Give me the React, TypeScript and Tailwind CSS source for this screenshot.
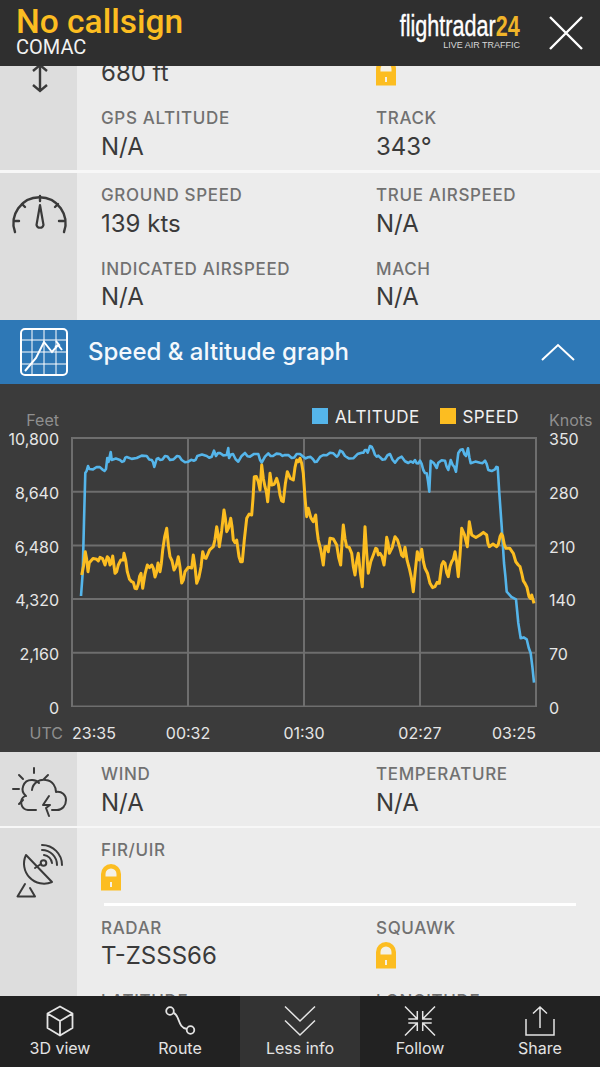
import React from "react";

const altitude: number[][] = [
  [81, 596], [82.7, 573], [85.3, 473], [88, 466], [89.3, 469], [96.7, 467], [103, 470], [106, 469], [107.3, 458], [108.5, 462],
  [110.7, 452], [111.7, 460], [120, 460], [124, 461], [126.7, 457], [136.7, 458], [146.7, 456], [151.7, 460], [154.3, 467], [156.7, 459],
  [160, 460], [165, 456], [170, 460], [177, 456], [181.7, 460], [188.3, 461.7], [194, 460.7], [197.3, 456], [206.7, 456], [211.7, 456.7],
  [214, 450.7], [216, 456], [220, 453], [226.7, 455], [228.3, 448], [229, 458], [233, 454], [238.3, 461.7], [245, 453], [250, 456.7],
  [258.3, 454], [261.7, 462.7], [268.3, 453.3], [273, 456], [280, 454], [285, 455], [291.7, 458], [296.7, 454], [303.3, 456.7], [308, 457.3],
  [313, 459.3], [316.7, 461.7], [323.3, 455], [330, 452.7], [336.7, 456.7], [340, 450.7], [345, 456], [353.3, 458.3], [361.7, 452.7], [365, 450],
  [367.7, 452.7], [370, 446], [373.3, 450], [376.7, 456.7], [380, 457.3], [385, 459.3], [390, 454], [395, 462.7], [401.7, 456.7], [408.3, 463],
  [413, 462.7], [415, 460], [416.7, 463.3], [420, 460.7], [423.3, 470], [426.7, 473.3], [429.3, 491.7], [430.7, 460.7], [436.7, 468], [438.3, 462.7],
  [445, 460.7], [448.3, 470], [450.7, 460], [452.7, 465], [456, 471.7], [458.3, 453], [462.7, 449.3], [466, 456], [468, 448.3], [470.7, 463.3],
  [480, 462.7], [485, 460.7], [488.3, 470], [495, 469.3], [497.7, 467.3], [499.3, 493], [501.7, 526.7], [504, 563], [506.7, 591.7], [516, 599.3],
  [518.3, 623], [520.7, 638.3], [526.7, 639.3], [530.7, 653.3], [534, 682.7],
];

const speed: number[][] = [
  [81.7, 575], [85.3, 551.7], [88, 571.7], [89.3, 562.7], [96.7, 559.3], [100, 557.3], [105, 565], [107.3, 556.7], [110, 565], [112.7, 556],
  [115, 573.3], [118.3, 565], [123.3, 560], [124, 553.3], [127.3, 571.7], [131.7, 581.7], [135, 588.3], [138.3, 584], [141, 573.3], [142.7, 588.3],
  [147.3, 565], [151.7, 565], [155, 577], [158, 563], [160, 571.7], [162.7, 550], [166.7, 528.3], [170, 556.7], [174, 570], [178.3, 556.7],
  [181.7, 583], [185, 571.7], [191.7, 568], [193.3, 555], [196.7, 583.3], [201, 567], [202.7, 551.7], [206, 558.3], [213.3, 546.7], [216.7, 526.7],
  [219.3, 546.7], [224, 510], [226.7, 531.7], [230.7, 518.3], [233.3, 540], [236.7, 540], [239, 556.7], [242.3, 561.7], [244.3, 540], [246.7, 518.3],
  [251.7, 515], [254.3, 476.7], [258.3, 481.7], [260, 490], [261.7, 465], [265, 486.7], [267.7, 501.7], [270, 473.3], [271.7, 485], [276.7, 478.3],
  [280, 495], [283.3, 501.7], [287.3, 471.7], [293.3, 480], [296.7, 460], [300, 458.3], [303.3, 473.3], [306.7, 516.7], [308.3, 508.3], [313.3, 521.7],
  [315.7, 515], [318.3, 540], [323.3, 565], [325, 546.7], [328.3, 551.7], [330, 538.3], [336.7, 545], [340.7, 565], [343.3, 525], [346.7, 546.7],
  [351.7, 553.3], [355, 575], [358.3, 553.3], [362.3, 586.7], [365, 526.7], [368.3, 573.3], [373.3, 555], [375.7, 548.3], [378.3, 555], [380, 553.3],
  [384, 565], [386.7, 537.3], [389.3, 553.3], [395, 536.7], [400, 548.3], [403.3, 556.7], [405, 547.3], [409.3, 568.3], [413.3, 591.7], [415, 573.3],
  [417.3, 551.7], [419.3, 560], [421.7, 549.3], [425, 568.3], [430, 583.3], [435, 586.7], [439.3, 583.3], [441.7, 565], [445, 563.3], [448.3, 576.7],
  [451.7, 561.7], [455, 551.7], [458.3, 576.7], [461.7, 528.3], [467.3, 546.7], [469.3, 521.7], [471.7, 535], [480, 535], [486.7, 535], [489.3, 546.7],
  [496.7, 546.7], [500, 536.7], [502.7, 536], [506, 548.3], [513.3, 553.3], [518.3, 565], [521.7, 573.3], [525, 583.3], [529, 596.7], [531.7, 595], [534, 603.3],
];

// small zig-zag between traced points so the line has the noisy look of the data
const toPoints = (pts: number[][], noise: number) => {
  const out: string[] = [];
  pts.forEach((p, i) => {
    const next = pts[i + 1];
    out.push(`${p[0]},${p[1]}`);
    if (next && next[0] - p[0] > 2.5) {
      const off = i % 2 === 0 ? noise : -noise;
      out.push(`${(p[0] + next[0]) / 2},${(p[1] + next[1]) / 2 + off}`);
    }
  });
  return out.join(" ");
};

const Lock = () => (
  <svg width="20" height="27" viewBox="0 0 20 27" className="block">
    <path d="M0 26.500V10a10 10 0 0 1 20 0v16.500z" fill="#fcbd21" />
    <path d="M4.500 12.500V10a5.500 5.500 0 0 1 11 0v2.500z" fill="#f4f1e6" />
    <rect x="9" y="18" width="2" height="5" fill="#f4f1e6" />
  </svg>
);

const Field = ({ label, value, lock }: { label: string; value?: string; lock?: boolean }) => (
  <div className="h-[73.5px] pt-3">
    <div className="h-5 text-[17px] leading-5 font-medium tracking-[0.65px] text-[#717171]">{label}</div>
    {lock ? (
      <div className="mt-1">
        <Lock />
      </div>
    ) : (
      <div className="mt-[2.5px] h-8 text-[24px] leading-8 text-[#3a3a3a]">{value}</div>
    )}
  </div>
);

const Section = ({ icon, children, className }: { icon: React.ReactNode; children: React.ReactNode; className?: string }) => (
  <section className={`flex ${className ?? ""}`}>
    <div className="w-[77px] shrink-0 bg-[#dddddd]">{icon}</div>
    <div className="flex-1 bg-[#ececec] pl-6">{children}</div>
  </section>
);

const Grid = ({ children }: { children: React.ReactNode }) => (
  <div className="grid grid-cols-[275px_1fr]">{children}</div>
);

const NavItem = ({ label, icon, active }: { label: string; icon: React.ReactNode; active?: boolean }) => (
  <div className={`flex h-full w-[120px] flex-col items-center pt-[9px] ${active ? "bg-[#333333]" : ""}`}>
    <div className="h-[33px]">{icon}</div>
    <div className="text-[16px] leading-5 text-[#e4e4e4]">{label}</div>
  </div>
);

const yLeft = ["10,800", "8,640", "6,480", "4,320", "2,160", "0"];
const yRight = ["350", "280", "210", "140", "70", "0"];

export default function App() {
  return (
    <div className="flex h-[1067px] w-[600px] flex-col overflow-hidden bg-[#f7f7f7] font-['Inter',sans-serif]">
      {/* header */}
      <header className="relative z-10 flex h-[66px] shrink-0 items-start justify-between bg-[#2f2f2f] pl-4 pr-4">
        <div className="font-['Roboto',sans-serif]">
          <div className="pt-[5px] text-[33.5px] leading-[34px] font-medium text-[#fcbd21]">No callsign</div>
          <div className="text-[20px] leading-4 text-[#f2f2f2]">COMAC</div>
        </div>
        <div className="flex items-start">
          <div className="mt-[10px] mr-[28px] flex w-[122px] flex-col items-end font-['Liberation_Sans',sans-serif]">
            <div className="flex h-[32px] origin-right scale-x-[0.72] items-center whitespace-nowrap text-[30px] leading-[32px] text-white [-webkit-text-stroke:0.4px_white]">
              flightradar<span className="font-bold text-[#f0b429] [-webkit-text-stroke:0]">24</span>
            </div>
            <div className="-mt-px whitespace-nowrap text-[9px] leading-[9px] text-[#d8d8d8]">LIVE AIR TRAFFIC</div>
          </div>
          <svg width="36" height="36" viewBox="0 0 36 36" className="mt-[15px]" fill="none" stroke="#ffffff" strokeWidth="2.4">
            <path d="M2 2l32 32M34 2L2 34" />
          </svg>
        </div>
      </header>

      <main className="flex-1 overflow-hidden">
        <div className="-mt-[43.5px]">
          {/* altitude */}
          <Section
            icon={
              <svg width="77" height="60" viewBox="0 0 77 60" fill="none" stroke="#3a3a3a" strokeWidth="2.4" className="mt-[38px]">
                <path d="M40 4v26M33 10l7-6 7 6M33 24l7 6 7-6" />
              </svg>
            }
          >
            <Grid>
              <Field label="" value="680 ft" />
              <Field label="" lock />
              <Field label="GPS ALTITUDE" value="N/A" />
              <Field label="TRACK" value="343°" />
            </Grid>
          </Section>

          {/* speed */}
          <Section
            className="mt-[3.5px]"
            icon={
              <svg width="77" height="70" viewBox="0 0 77 70" fill="none" stroke="#3a3a3a" strokeWidth="2.4" strokeLinecap="round">
                <path d="M15 59A26 26 0 1 1 64 59" />
                <path d="M14 48h5M59 48h5M40 23v5M22 31l3 3M58 31l-3 3" />
                <path d="M40 32l3.500 20a3.600 3.600 0 0 1-7 0z" strokeWidth="2.2" strokeLinejoin="round" />
              </svg>
            }
          >
            <Grid>
              <Field label="GROUND SPEED" value="139 kts" />
              <Field label="TRUE AIRSPEED" value="N/A" />
              <Field label="INDICATED AIRSPEED" value="N/A" />
              <Field label="MACH" value="N/A" />
            </Grid>
          </Section>

          {/* graph title */}
          <div className="flex h-[64px] items-center bg-[#2e78b6] pl-5 pr-[25px]">
            <svg width="48" height="48" viewBox="0 0 48 48" fill="none" stroke="#ffffff" className="shrink-0">
              <rect x="1" y="1" width="46" height="46" rx="4" strokeWidth="2" />
              <path d="M12 1v46M24 1v46M36 1v46M1 12h46M1 24h46M1 36h46" strokeWidth="1" />
              <path d="M5 43L16 30l8-16 8 10 6-7 4 5M36 13l3 4-4 2" strokeWidth="2" />
            </svg>
            <div className="ml-5 flex-1 text-[24px] leading-7 font-medium text-[#f4f8fc]">Speed &amp; altitude graph</div>
            <svg width="34" height="18" viewBox="0 0 34 18" fill="none" stroke="#ffffff" strokeWidth="2">
              <path d="M1 17L17 2l16 15" />
            </svg>
          </div>

          {/* chart */}
          <div className="h-[368px] bg-[#3b3b3b]">
            <div className="flex h-[45px]">
              <div className="w-[59px] pt-[26px] text-right text-[16px] leading-5 text-[#8f8f8f]">Feet</div>
              <div className="flex flex-1 items-start justify-end pt-[24px] pr-[17px] text-[17px] leading-[18px] tracking-[0.4px] text-[#f0f0f0]">
                <span className="mr-[7px] h-4 w-4 bg-[#55b5ea]" />
                <span>ALTITUDE</span>
                <span className="mr-[7px] ml-5 h-4 w-4 bg-[#fcbd21]" />
                <span>SPEED</span>
              </div>
              <div className="w-[64px] pt-[26px] pl-[13px] text-[16px] leading-5 text-[#8f8f8f]">Knots</div>
            </div>
            <div className="flex h-[289px]">
              <div className="flex w-[59px] flex-col justify-between text-right text-[16px] leading-5 text-[#e6e6e6]">
                {yLeft.map((v) => (
                  <div key={v}>{v}</div>
                ))}
              </div>
              <svg width="466" height="270" viewBox="71 437 466 270" fill="none" className="mt-[8px] ml-3 shrink-0">
                <path
                  d="M72 438H536V706.500H72ZM72 491.700H536M72 545.400H536M72 599.100H536M72 652.800H536M188 438V706.500M304 438V706.500M420 438V706.500"
                  stroke="#6e6e6e"
                  strokeWidth="2"
                />
                <polyline points={toPoints(altitude, 1.4)} stroke="#55b5ea" strokeWidth="2.6" strokeLinejoin="round" />
                <polyline points={toPoints(speed, 2.6)} stroke="#fcbd21" strokeWidth="3" strokeLinejoin="round" />
              </svg>
              <div className="flex flex-1 flex-col justify-between pl-3 text-[16px] leading-5 text-[#e6e6e6]">
                {yRight.map((v) => (
                  <div key={v}>{v}</div>
                ))}
              </div>
            </div>
            <div className="flex pt-[5px] text-[16px] leading-5 text-[#e6e6e6]">
              <div className="w-[63px] text-right text-[#8f8f8f]">UTC</div>
              <div className="ml-[9px] grid grid-cols-[58px_116px_116px_116px_58px]">
                <div className="whitespace-nowrap">23:35</div>
                <div className="text-center">00:32</div>
                <div className="text-center">01:30</div>
                <div className="text-center">02:27</div>
                <div className="flex justify-end whitespace-nowrap">03:25</div>
              </div>
            </div>
          </div>

          {/* wind */}
          <Section
            icon={
              <svg width="77" height="73" viewBox="0 0 77 73" fill="none" stroke="#3a3a3a" strokeWidth="2" strokeLinecap="round" strokeLinejoin="round">
                <path d="M34 21v-5M23 27l-4-4M44 27l4-4M19 37h-6M23 48l-4 4" />
                <path d="M26 44a9 9 0 0 1 6-16 9 9 0 0 1 7 3" />
                <path d="M36 58h-8a7.500 7.500 0 0 1-3-14M32 38c1-8 8-11 14-10 7 1 10 7 10 12 6-1 10 3 10 8 0 6-4 10-9 10h-5" />
                <path d="M49 44l-6 9h7l-4 3 3 8" />
              </svg>
            }
          >
            <Grid>
              <Field label="WIND" value="N/A" />
              <Field label="TEMPERATURE" value="N/A" />
            </Grid>
          </Section>

          {/* radar */}
          <Section
            className="mt-[2.5px]"
            icon={
              <svg width="77" height="80" viewBox="0 0 77 80" fill="none" stroke="#3a3a3a" strokeWidth="2" strokeLinecap="round" strokeLinejoin="round">
                <path d="M26 27A20 20 0 0 0 52 54Z" />
                <path d="M35 40l6-4" />
                <circle cx="43.5" cy="35" r="2.8" />
                <path d="M42 17A20 20 0 0 1 62 37M42 22A15 15 0 0 1 57 37M44 27A9 9 0 0 1 52 35" />
                <path d="M25 56l-7.500 12.500H35L30 60" />
              </svg>
            }
          >
            <Field label="FIR/UIR" lock />
            <div className="mt-px ml-[3px] h-[3px] w-[472px] bg-white" />
            <Grid>
              <Field label="RADAR" value="T-ZSSS66" />
              <Field label="SQUAWK" lock />
              <Field label="LATITUDE" value="" />
              <Field label="LONGITUDE" value="" />
            </Grid>
          </Section>
        </div>
      </main>

      {/* bottom nav */}
      <nav className="relative z-10 flex h-[71px] shrink-0 bg-[#222222]">
        <NavItem
          label="3D view"
          icon={
            <svg width="28" height="32" viewBox="0 0 28 32" fill="none" stroke="#e4e4e4" strokeWidth="1.8" strokeLinejoin="round">
              <path d="M14 1.500L26.500 8.500V23L14 30.500 1.500 23V8.500ZM1.500 8.500L14 16l12.500-7.500M14 16v14.500" />
            </svg>
          }
        />
        <NavItem
          label="Route"
          icon={
            <svg width="34" height="32" viewBox="0 0 34 32" fill="none" stroke="#e4e4e4" strokeWidth="1.8">
              <circle cx="7" cy="6" r="3.8" />
              <circle cx="27.5" cy="25" r="3.8" />
              <path d="M10.500 8c6 1 4 15 13.500 16" />
            </svg>
          }
        />
        <NavItem
          active
          label="Less info"
          icon={
            <svg width="34" height="32" viewBox="0 0 34 32" fill="none" stroke="#e4e4e4" strokeWidth="1.5">
              <path d="M2 1.500L17 16 32 1.500M2 15.500L17 30 32 15.500" />
            </svg>
          }
        />
        <NavItem
          label="Follow"
          icon={
            <svg width="34" height="32" viewBox="-17 -15.5 34 31" fill="none" stroke="#e4e4e4" strokeWidth="1.5">
              <path d="M-15-14.500L-2.700-2M-2.700-10V-2H-11.700M15-14.500L2.700-2M2.700-10V-2H11.700M-15 14.500L-2.700 2M-2.700 10V2H-11.700M15 14.500L2.700 2M2.700 10V2H11.700" />
            </svg>
          }
        />
        <NavItem
          label="Share"
          icon={
            <svg width="32" height="32" viewBox="0 0 32 32" fill="none" stroke="#e4e4e4" strokeWidth="1.5">
              <path d="M2 14v16h28V14M16 23V2M9 8.500L16 2l7 6.500" />
            </svg>
          }
        />
      </nav>
    </div>
  );
}
